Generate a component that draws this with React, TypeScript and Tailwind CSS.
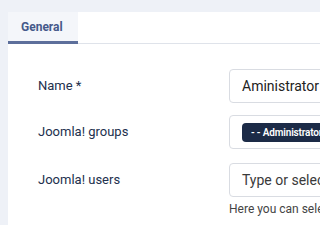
import React from 'react';

export default function App() {
  return (
    <div className="w-full h-[225px] overflow-hidden bg-[#eef1f7] pl-[8px] pt-[12px] font-['Roboto',sans-serif]">
      <div className="h-full bg-white overflow-hidden">
        {/* tabs */}
        <div className="flex border-b border-[#dfe3ea]">
          <div className="w-[70px] h-[32px] bg-[#f4f6fa] border-b-[3px] border-[#5d6f9b] -mb-px flex items-center pl-[13px] pt-px">
            <span className="text-[12px] font-bold text-[#45598a]">General</span>
          </div>
        </div>

        {/* form */}
        <div className="pt-[25px] pl-[30px] flex flex-col">
          <div className="flex items-center h-[34px]">
            <label className="w-[191px] shrink-0 text-[13px] text-[#22304d]">Name *</label>
            <div className="w-[200px] shrink-0 h-[34px] border border-[#d9dce2] rounded-[4px] flex items-center pl-[12px] text-[14px] text-[#222]">
              Aministrator
            </div>
          </div>

          <div className="flex items-center h-[34px] mt-[12px]">
            <label className="w-[191px] shrink-0 text-[13px] text-[#22304d]">Joomla! groups</label>
            <div className="w-[200px] shrink-0 h-[34px] border border-[#d9dce2] rounded-[4px] flex items-center pl-[12px]">
              <span className="h-[19px] bg-[#1c2b47] rounded-[4px] pl-[9px] pr-[8px] flex items-center text-[10px] font-semibold tracking-[-0.15px] text-white whitespace-nowrap">
                - - Administrator
              </span>
            </div>
          </div>

          <div className="flex items-center h-[34px] mt-[14px]">
            <label className="w-[191px] shrink-0 text-[13px] text-[#22304d]">Joomla! users</label>
            <div className="w-[200px] shrink-0 h-[34px] border border-[#d9dce2] rounded-[4px] flex items-center pl-[12px] text-[14px] text-[#3a3a3a] whitespace-nowrap">
              Type or select some options
            </div>
          </div>

          <div className="pl-[191px] mt-[3px] text-[12px] text-[#444] whitespace-nowrap">
            Here you can select users
          </div>
        </div>
      </div>
    </div>
  );
}
